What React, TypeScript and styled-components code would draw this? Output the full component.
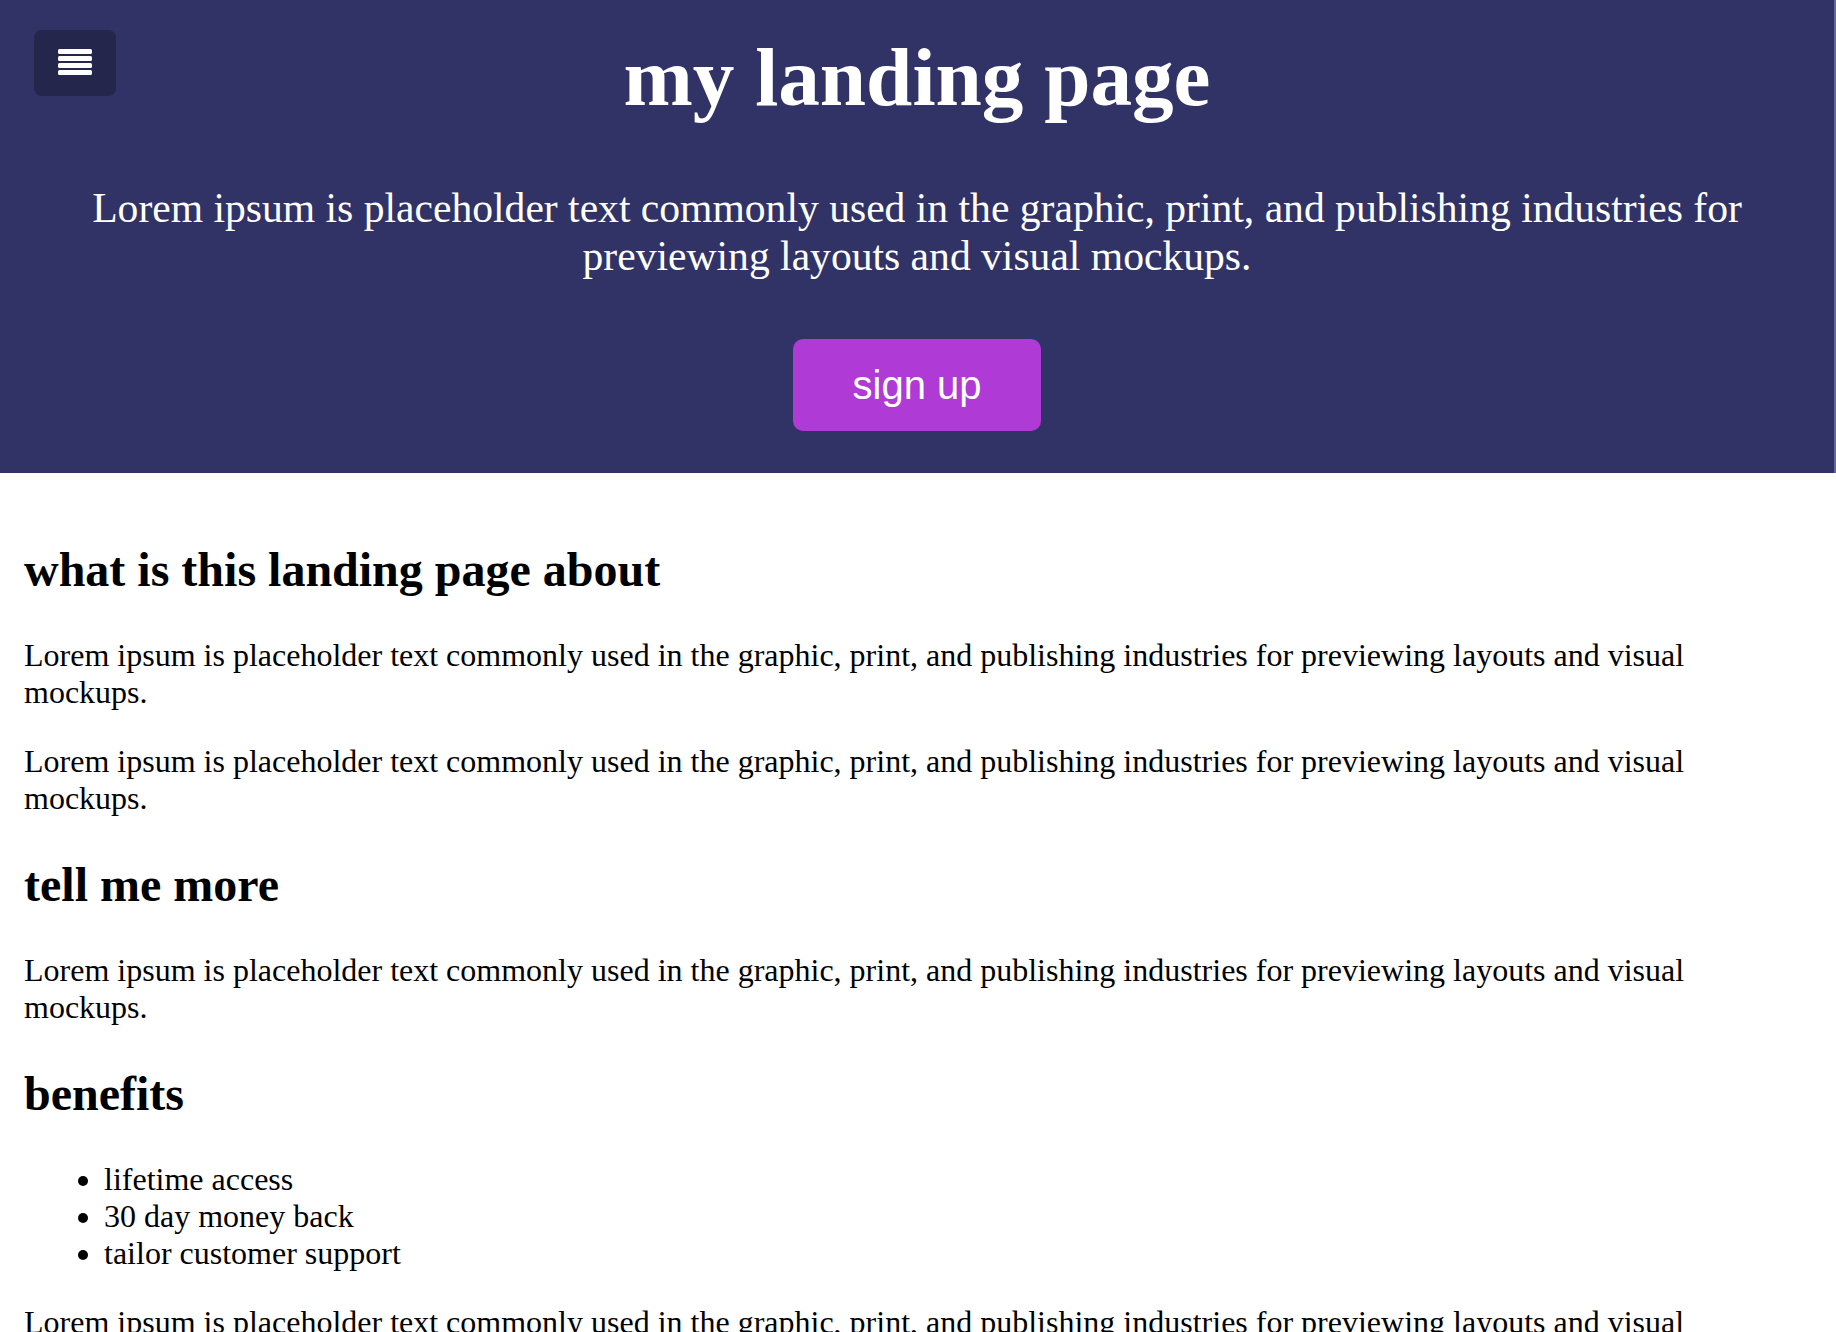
import React from "react";
import styled, {createGlobalStyle} from "styled-components";

const GlobalStyle = createGlobalStyle`
  body {
    margin: 0;
    background: white;
    font-family: "Liberation Serif", "Times New Roman", serif;
    color: black;
  }
`

const Header = styled.header`
  position: relative;
  background: #313366;
  color: white;
  text-align: center;
  padding: 29px 24px 42px;
  border-right: 2px solid #66679a;
`

const MenuButton = styled.button`
  position: absolute;
  left: 34px;
  top: 30px;
  width: 82px;
  height: 66px;
  border: none;
  border-radius: 8px;
  background: #25264b;
  display: flex;
  align-items: center;
  justify-content: center;
  cursor: pointer;
  padding: 0;
`

const Title = styled.h1`
  margin: 0;
  font-size: 83.2px;
  font-weight: bold;
`

const Subtitle = styled.p`
  margin: 59px 0 59px;
  padding: 0 50px;
  font-size: 41.6px;
`

const SignUp = styled.button`
  width: 248px;
  height: 92px;
  border: none;
  border-radius: 10px;
  background: #af3ad5;
  color: white;
  font-family: "Liberation Sans", Arial, sans-serif;
  font-size: 40px;
  cursor: pointer;
`

const Content = styled.main`
  padding: 29px 24px 0;
`

const Heading = styled.h2`
  font-size: 48px;
  margin: 40px 0;
`

const Text = styled.p`
  font-size: 32px;
  margin: 32px 0;
`

const List = styled.ul`
  font-size: 32px;
  margin: 32px 0;
  padding-left: 80px;
`

const lorem = "Lorem ipsum is placeholder text commonly used in the graphic, print, and publishing industries for previewing layouts and visual mockups."

const MenuIcon: React.FC = () => (
    <svg width="34" height="28" viewBox="0 0 34 28">
        {[0, 7, 14, 21].map(y => (
            <rect key={y} x="0" y={y} width="34" height="5" rx="1.5" fill="white"/>
        ))}
    </svg>
)

const App: React.FC = () => {
    return (
        <>
            <GlobalStyle/>
            <Header>
                <MenuButton aria-label="menu">
                    <MenuIcon/>
                </MenuButton>
                <Title>my landing page</Title>
                <Subtitle>{lorem}</Subtitle>
                <SignUp>sign up</SignUp>
            </Header>
            <Content>
                <Heading>what is this landing page about</Heading>
                <Text>{lorem}</Text>
                <Text>{lorem}</Text>
                <Heading>tell me more</Heading>
                <Text>{lorem}</Text>
                <Heading>benefits</Heading>
                <List>
                    <li>lifetime access</li>
                    <li>30 day money back</li>
                    <li>tailor customer support</li>
                </List>
                <Text>{lorem}</Text>
            </Content>
        </>
    )
}

export default App;
